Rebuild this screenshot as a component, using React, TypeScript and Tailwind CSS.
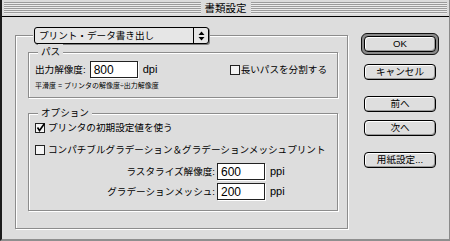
import React from "react";

const FONT = "font-[family-name:'Liberation_Sans','Noto_Sans_CJK_JP',sans-serif]";

function Stripes() {
  return (
    <div className="flex-1 h-[12px] bg-[image:repeating-linear-gradient(to_bottom,#9c9c9c_0px,#9c9c9c_1px,#ececec_1px,#ececec_2px)]" />
  );
}

function Checkbox({ checked }: { checked?: boolean }) {
  return (
    <span className="relative w-[10px] h-[10px] shrink-0 border border-[#222] bg-[#f4f4f4]">
      {checked && (
        <svg
          className="absolute left-[0px] top-[-1px] overflow-visible"
          width="9"
          height="9"
          viewBox="0 0 9 9"
        >
          <path d="M1.5 4.5 L3.5 7.5 L8.5 0.5" fill="none" stroke="#000" strokeWidth="1.6" />
        </svg>
      )}
    </span>
  );
}

function Field({ value }: { value: string }) {
  return (
    <div className="w-[48px] h-[17px] shrink-0 border border-[#222] bg-white shadow-[1px_1px_0_#fff] pl-[3px] flex items-center text-[12px]">
      {value}
    </div>
  );
}

function Button({ label }: { label: string }) {
  return (
    <div className="w-[72px] h-[16px] rounded-[4px] border border-black bg-[#dedede] shadow-[inset_1px_1px_0_#fff,inset_-1px_-1px_0_#9a9a9a] flex items-center justify-center">
      {label}
    </div>
  );
}

export default function App() {
  return (
    <div
      className={`w-[450px] h-[241px] overflow-hidden flex flex-col bg-[#dddddd] text-black text-[9.6px] leading-none border-l-2 border-l-[#1c1c1c] border-r border-r-[#8a8a8a] border-b-2 border-b-[#8f8f8f] ${FONT}`}
    >
      {/* title bar */}
      <div className="h-[17px] shrink-0 flex items-start border-b border-black bg-[#dcdcdc] px-[2px] pt-[2px]">
        <Stripes />
        <div className="w-[50px] h-[12px] flex items-center justify-center text-[10.5px]">書類設定</div>
        <Stripes />
      </div>

      <div className="flex pl-[13px] pt-[10px]">
        {/* main group */}
        <fieldset className="w-[333px] h-[202px] border border-[#8c8c8c] shadow-[1px_1px_0_#fff,inset_1px_1px_0_#fff] pl-[12px] pr-[9px]">
          <legend className="ml-[5px] px-[1px] bg-[#dddddd]">
            <div className="w-[175px] h-[17px] flex border border-black rounded-[3px] bg-[#e6e6e6] shadow-[1px_1px_0_#808080]">
              <div className="flex-1 pl-[4px] flex items-center">プリント・データ書き出し</div>
              <div className="w-[15px] border-l border-black flex items-center justify-center">
                <svg width="7" height="10" viewBox="0 0 7 10">
                  <path d="M0.5 4 L3.5 0.5 L6.5 4 Z M0.5 6 L3.5 9.5 L6.5 6 Z" fill="#000" />
                </svg>
              </div>
            </div>
          </legend>

          {/* path */}
          <fieldset className="w-[310px] h-[54px] border border-[#8c8c8c] shadow-[1px_1px_0_#fff,inset_1px_1px_0_#fff] pl-[6px]">
            <legend className="ml-[3px] px-[3px] leading-[16px] bg-[#dddddd]">パス</legend>
            <div className="mt-[1px] h-[17px] flex items-center">
              <span>出力解像度:</span>
              <div className="ml-[4px]">
                <Field value="800" />
              </div>
              <span className="ml-[5px] text-[11px]">dpi</span>
              <div className="ml-auto mr-[10px] flex items-center">
                <Checkbox />
                <span className="ml-[1px]">長いパスを分割する</span>
              </div>
            </div>
            <div className="mt-[3px] text-[7px] leading-[9px]">平滑度 = プリンタの解像度÷出力解像度</div>
          </fieldset>

          {/* options */}
          <fieldset className="mt-[7px] w-[310px] h-[106px] border border-[#8c8c8c] shadow-[1px_1px_0_#fff,inset_1px_1px_0_#fff] pl-[6px]">
            <legend className="ml-[3px] px-[3px] leading-[16px] bg-[#dddddd]">オプション</legend>
            <div className="h-[14px] flex items-center">
              <Checkbox checked />
              <span className="ml-[3px]">プリンタの初期設定値を使う</span>
            </div>
            <div className="mt-[8px] h-[14px] flex items-center whitespace-nowrap">
              <Checkbox />
              <span className="ml-[3px]">コンパチブルグラデーション＆グラデーションメッシュプリント</span>
            </div>
            <div className="mt-[6px] flex items-center">
              <span className="w-[180px] text-right">ラスタライズ解像度:</span>
              <div className="ml-[2px]">
                <Field value="600" />
              </div>
              <span className="ml-[5px] text-[11px]">ppi</span>
            </div>
            <div className="mt-[3px] flex items-center">
              <span className="w-[180px] text-right">グラデーションメッシュ:</span>
              <div className="ml-[2px]">
                <Field value="200" />
              </div>
              <span className="ml-[5px] text-[11px]">ppi</span>
            </div>
          </fieldset>
        </fieldset>

        {/* buttons */}
        <div className="ml-[13px] pt-[6px] w-[78px] flex flex-col items-center">
          <div className="rounded-[6px] border border-[#111] bg-[#8a8a8a] p-[2px]">
            <Button label="OK" />
          </div>
          <div className="mt-[9px]">
            <Button label="キャンセル" />
          </div>
          <div className="mt-[16px]">
            <Button label="前へ" />
          </div>
          <div className="mt-[8px]">
            <Button label="次へ" />
          </div>
          <div className="mt-[16px]">
            <Button label="用紙設定..." />
          </div>
        </div>
      </div>
    </div>
  );
}
